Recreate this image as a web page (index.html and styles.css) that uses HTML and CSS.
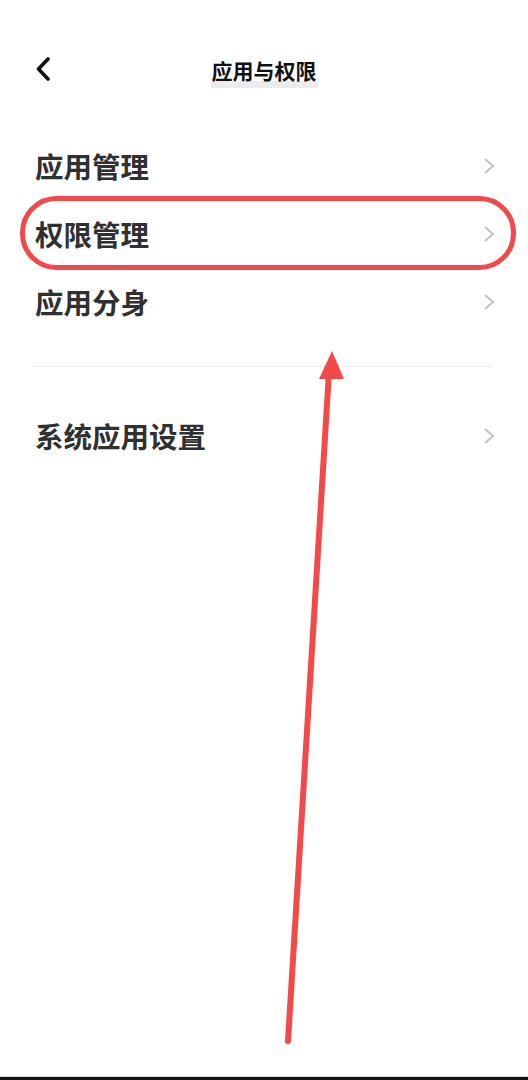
FILE: index.html
```html
<!DOCTYPE html>
<html lang="zh-CN">
<head>
<meta charset="utf-8">
<title>应用与权限</title>
<link rel="stylesheet" href="styles.css">
</head>
<body>
<div class="screen">
  <header class="topbar">
    <span class="back">
      <svg width="16" height="24" viewBox="0 0 16 24"><path d="M13 2 L3.5 12 L13 22" fill="none" stroke="#111" stroke-width="3.6" stroke-linecap="round" stroke-linejoin="round"/></svg>
    </span>
    <h1 class="title">应用与权限</h1>
  </header>

  <ul class="list">
    <li class="item"><span class="label">应用管理</span><span class="chev"><svg width="12" height="18" viewBox="0 0 12 18"><path d="M2 2 L10 9 L2 16" fill="none" stroke="#c2c2c2" stroke-width="2"/></svg></span></li>
    <li class="item"><span class="label">权限管理</span><span class="chev"><svg width="12" height="18" viewBox="0 0 12 18"><path d="M2 2 L10 9 L2 16" fill="none" stroke="#c2c2c2" stroke-width="2"/></svg></span></li>
    <li class="item"><span class="label">应用分身</span><span class="chev"><svg width="12" height="18" viewBox="0 0 12 18"><path d="M2 2 L10 9 L2 16" fill="none" stroke="#c2c2c2" stroke-width="2"/></svg></span></li>
  </ul>

  <div class="divider"></div>

  <ul class="list list-second">
    <li class="item"><span class="label">系统应用设置</span><span class="chev"><svg width="12" height="18" viewBox="0 0 12 18"><path d="M2 2 L10 9 L2 16" fill="none" stroke="#c2c2c2" stroke-width="2"/></svg></span></li>
  </ul>

  <div class="bottom-edge"></div>

  <svg class="annotation" width="528" height="1080" viewBox="0 0 528 1080">
    <rect x="22.5" y="198.5" width="491" height="69" rx="34" ry="34" fill="none" stroke="#f24a4a" stroke-width="5"/>
    <line x1="288" y1="1041" x2="329" y2="372" stroke="#f24a4a" stroke-width="6" stroke-linecap="round"/>
    <polygon points="332,351 319,379 344,379" fill="#f24a4a"/>
  </svg>
</div>
</body>
</html>
```

FILE: styles.css
```css
* { box-sizing: border-box; }
html, body {
  margin: 0;
  padding: 0;
  background: #fff;
}
body {
  font-family: "Noto Sans CJK SC", "Noto Sans", sans-serif;
  color: #2e2e2e;
}
.screen {
  position: relative;
  width: 528px;
  height: 1080px;
  display: flex;
  flex-direction: column;
  overflow: hidden;
  background: #fff;
}
.topbar {
  position: relative;
  height: 132px;
  display: flex;
  align-items: flex-start;
  justify-content: center;
  padding-top: 55px;
}
.back {
  position: absolute;
  left: 35px;
  top: 57px;
  width: 16px;
  height: 24px;
  display: block;
}
.back svg { display: block; }
.title {
  margin: 0;
  font-size: 21px;
  font-weight: 700;
  line-height: 30px;
  color: #111;
  padding: 0 1px 3px;
  background: linear-gradient(to bottom, transparent 26px, #ececec 26px);
}
.list {
  list-style: none;
  margin: 0;
  padding: 0;
}
.item {
  height: 68px;
  display: flex;
  align-items: center;
  justify-content: space-between;
  padding: 0 33px 0 35px;
}
.label {
  font-size: 28.5px;
  font-weight: 700;
  line-height: 1;
  color: #303030;
}
.chev {
  display: block;
  width: 12px;
  height: 18px;
}
.chev svg { display: block; }
.divider {
  height: 1px;
  margin: 30px 36px 0 34px;
  background: #ededed;
}
.list-second {
  margin-top: 35px;
}
.bottom-edge {
  margin-top: auto;
  height: 4px;
  border-top: 1px solid #d8d8d8;
  background: #141414;
}
.annotation {
  position: absolute;
  left: 0;
  top: 0;
  pointer-events: none;
}
```
